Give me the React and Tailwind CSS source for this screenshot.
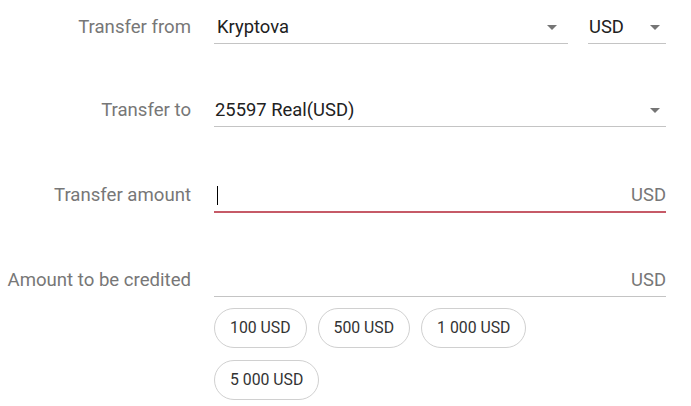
function Caret() {
  return (
    <svg width="10" height="5" viewBox="0 0 10 5" className="shrink-0 fill-[#757575]">
      <path d="M0 0 L10 0 L5 5 Z" />
    </svg>
  )
}

function Label({ children }) {
  return (
    <div className="w-[191px] shrink-0 text-right text-[18.6px] leading-6 text-[#777777]">
      {children}
    </div>
  )
}

export default function App() {
  const chips = ['100 USD', '500 USD', '1 000 USD', '5 000 USD']

  return (
    <div className="w-[691px] h-[406px] bg-white pt-[15px] pr-[25px] font-['Roboto',sans-serif] text-[#212121] overflow-hidden">
      {/* Transfer from */}
      <div className="flex items-start gap-[23px]">
        <Label>Transfer from</Label>
        <div className="flex flex-1 gap-5">
          <div className="flex flex-1 items-center justify-between border-b border-[#c4c4c4] pb-1 pl-[3px] pr-[11px]">
            <span className="text-[18.4px] leading-6">Kryptova</span>
            <Caret />
          </div>
          <div className="flex w-[78px] items-center justify-between border-b border-[#c4c4c4] pb-1 pl-px pr-[6px]">
            <span className="text-[18.4px] leading-6">USD</span>
            <Caret />
          </div>
        </div>
      </div>

      {/* Transfer to */}
      <div className="mt-[54px] flex items-start gap-[23px]">
        <Label>Transfer to</Label>
        <div className="flex flex-1 items-center justify-between border-b border-[#c4c4c4] pb-1 pl-px pr-[6px]">
          <span className="text-[18.4px] leading-6">25597 Real(USD)</span>
          <Caret />
        </div>
      </div>

      {/* Transfer amount */}
      <div className="mt-[56px] flex items-start gap-[23px]">
        <Label>Transfer amount</Label>
        <div className="flex flex-1 items-center justify-between border-b-2 border-[#c65a67] pb-1 pl-[3px]">
          <span className="flex h-6 items-center">
            <span className="block h-[19px] w-px bg-black" />
          </span>
          <span className="text-[18.4px] leading-6 text-[#777777]">USD</span>
        </div>
      </div>

      {/* Amount to be credited */}
      <div className="mt-[55px] flex items-start gap-[23px]">
        <Label>Amount to be credited</Label>
        <div className="flex-1">
          <div className="flex items-center justify-end border-b border-[#c4c4c4] pb-1">
            <span className="text-[18.4px] leading-6 text-[#777777]">USD</span>
          </div>
          <div className="mt-[11px] flex max-w-[360px] flex-wrap gap-x-[11px] gap-y-3">
            {chips.map((c) => (
              <button
                key={c}
                className="h-10 rounded-full border border-[#d0d0d0] bg-white px-[15px] text-[15.8px] text-[#333333]"
              >
                {c}
              </button>
            ))}
          </div>
        </div>
      </div>
    </div>
  )
}
